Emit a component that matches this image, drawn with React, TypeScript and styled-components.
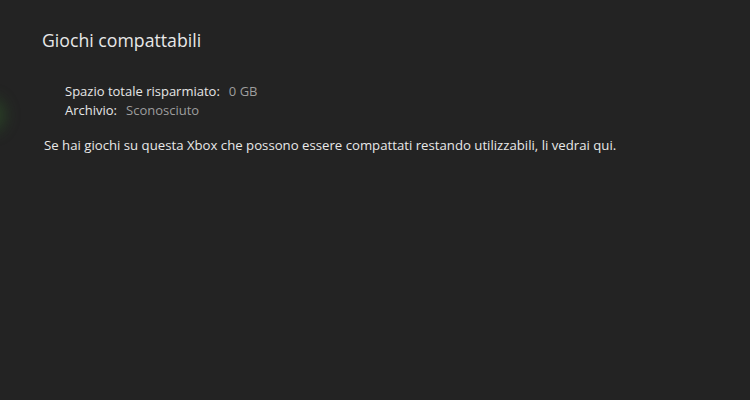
import React from "react";
import styled, { createGlobalStyle } from "styled-components";

const Global = createGlobalStyle`
  html, body { margin: 0; padding: 0; background: #232323; }
  body { font-family: "Open Sans", "Noto Sans", sans-serif; }
`;

const Page = styled.div`
  position: relative;
  width: 750px;
  height: 400px;
  background: #232323;
  overflow: hidden;
  padding: 28px 0 0 42px;
  box-sizing: border-box;
`;

const Glow = styled.div`
  position: absolute;
  left: -24px;
  top: 92px;
  width: 36px;
  height: 46px;
  border-radius: 50%;
  background: radial-gradient(ellipse at center, rgba(55, 120, 45, 0.4) 0%, rgba(40, 80, 35, 0.18) 55%, rgba(35, 35, 35, 0) 100%);
  filter: blur(5px);
`;

const Title = styled.h1`
  margin: 0;
  font-size: 17.7px;
  font-weight: 400;
  color: #e8e8e8;
  line-height: 24px;
`;

const Info = styled.div`
  display: flex;
  flex-direction: column;
  margin: 30px 0 0 23px;
`;

const InfoRow = styled.div`
  display: flex;
  gap: 9px;
  font-size: 13px;
  line-height: 19px;
`;

const Label = styled.span`
  color: #e6e6e6;
`;

const Value = styled.span`
  color: #9e9e9e;
`;

const Body = styled.p`
  margin: 16px 0 0 2px;
  font-size: 13.2px;
  line-height: 19px;
  color: #e8e8e8;
`;

export default function App() {
  return (
    <>
      <Global />
      <Page>
        <Glow />
        <Title>Giochi compattabili</Title>
        <Info>
          <InfoRow>
            <Label>Spazio totale risparmiato:</Label>
            <Value>0 GB</Value>
          </InfoRow>
          <InfoRow>
            <Label>Archivio:</Label>
            <Value>Sconosciuto</Value>
          </InfoRow>
        </Info>
        <Body>
          Se hai giochi su questa Xbox che possono essere compattati restando utilizzabili, li vedrai qui.
        </Body>
      </Page>
    </>
  );
}
